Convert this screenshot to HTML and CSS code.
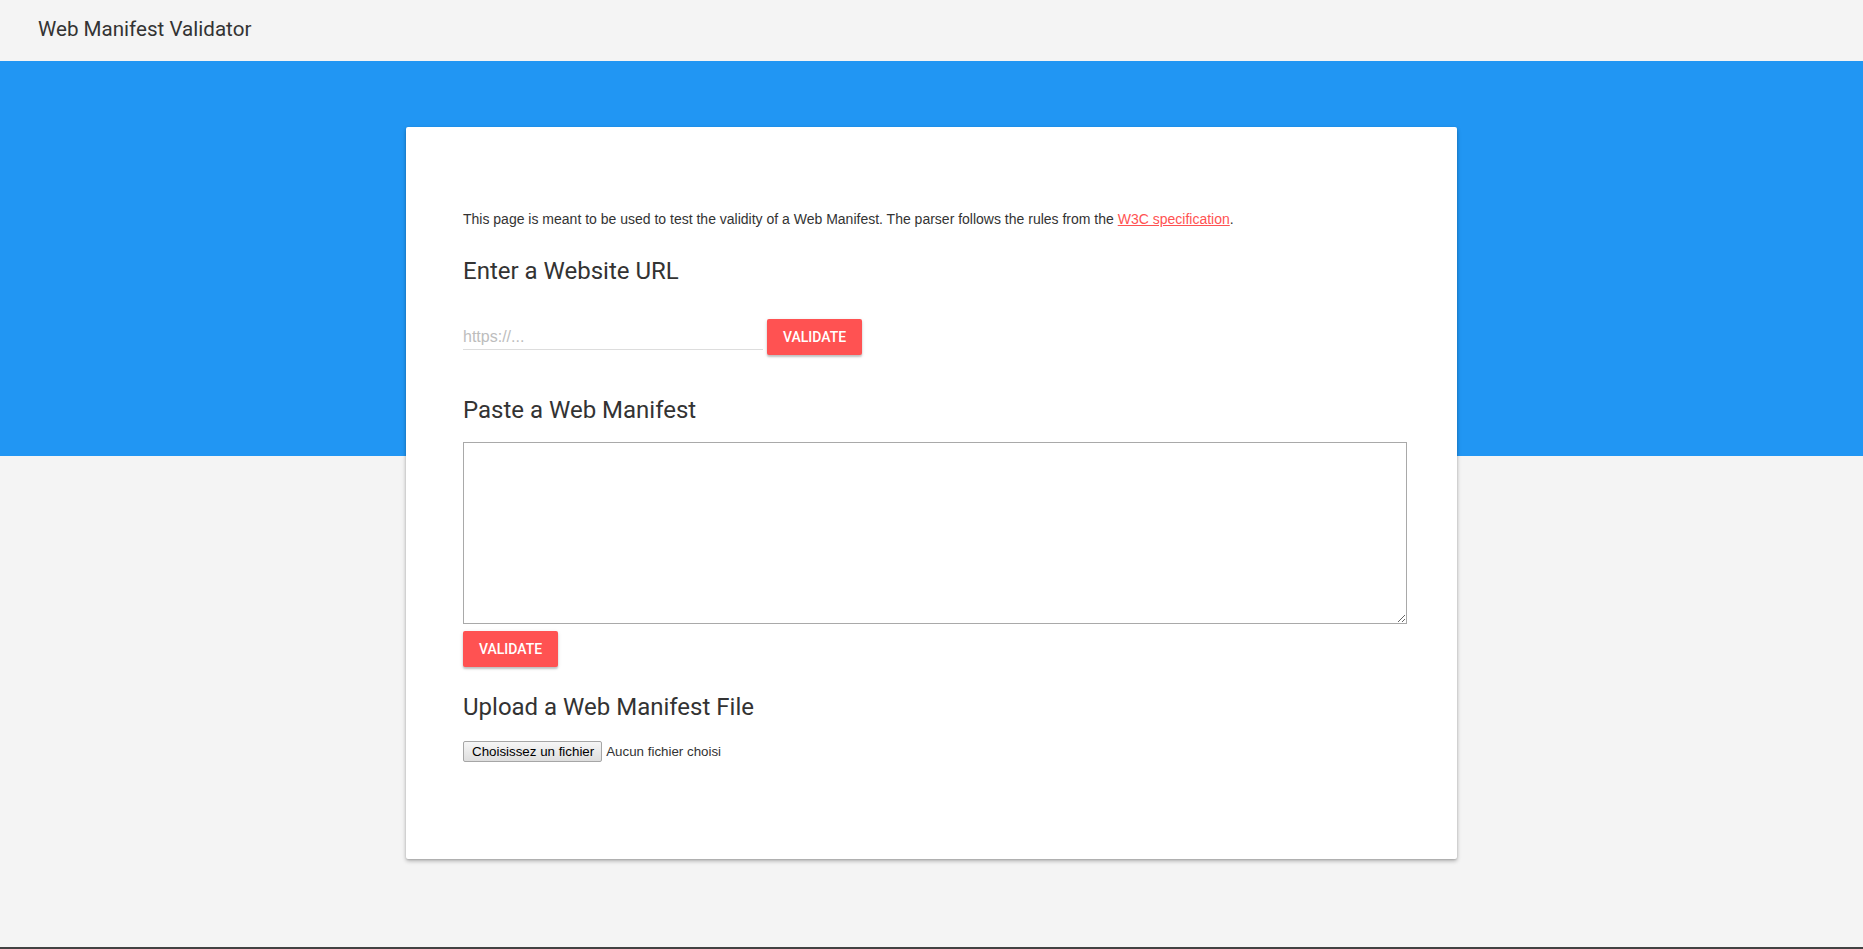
FILE: index.html
```
<!DOCTYPE html>
<html lang="fr">
<head>
<meta charset="utf-8">
<title>Web Manifest Validator</title>
<link rel="stylesheet" href="styles.css">
</head>
<body>
<header class="topbar">
  <span class="brand">Web Manifest Validator</span>
</header>
<main class="stage">
  <section class="card">
    <p class="intro">This page is meant to be used to test the validity of a Web Manifest. The parser follows the rules from the <a href="#" class="link">W3C specification</a>.</p>

    <h2 class="section-title first">Enter a Website URL</h2>
    <div class="url-row">
      <input class="url-input" type="text" placeholder="https://...">
      <button class="btn" type="button">VALIDATE</button>
    </div>

    <h2 class="section-title second">Paste a Web Manifest</h2>
    <textarea class="manifest"></textarea>
    <button class="btn btn-block" type="button">VALIDATE</button>

    <h2 class="section-title third">Upload a Web Manifest File</h2>
    <div class="file-row">
      <button class="file-btn" type="button">Choisissez un fichier</button>
      <span class="file-name">Aucun fichier choisi</span>
    </div>
  </section>
</main>
<footer class="footer"></footer>
</body>
</html>
```
FILE: styles.css
```
* { box-sizing: border-box; }

html, body {
  margin: 0;
  padding: 0;
}

body {
  background: #f4f4f4;
  font-family: Roboto, "Liberation Sans", Arial, sans-serif;
  color: #333;
}

.topbar {
  height: 61px;
  background: #f4f4f4;
  padding: 17px 0 0 38px;
}

.brand {
  display: block;
  font-size: 20.6px;
  line-height: 24px;
  color: #333;
}

.stage {
  background: linear-gradient(#2196f3 0, #2196f3 395px, #f4f4f4 395px);
  padding: 66px 0 88px;
}

.card {
  width: 1051px;
  height: 732px;
  margin: 0 auto;
  background: #fff;
  border-radius: 2px;
  box-shadow: 0 2px 4px rgba(0, 0, 0, 0.28), 0 1px 2px rgba(0, 0, 0, 0.12);
  padding: 83px 50px 0 57px;
}

.intro {
  margin: 0;
  font-family: "Liberation Sans", Arial, sans-serif;
  font-size: 14px;
  line-height: 18px;
  color: #333;
}

.link {
  color: #ff5252;
  text-decoration: underline;
}

.section-title {
  margin: 0;
  font-family: Roboto, sans-serif;
  font-weight: 400;
  font-size: 24px;
  line-height: 32px;
  color: #333;
}

.section-title.first { margin-top: 27px; }
.section-title.second { margin-top: 39px; }
.section-title.third { margin-top: 24px; }

.url-row {
  margin-top: 32px;
  display: flex;
  align-items: flex-start;
  gap: 4px;
}

.url-input {
  width: 300px;
  height: 31px;
  border: 0;
  border-bottom: 1px solid #ddd;
  padding: 6px 0 0;
  font-family: "Liberation Sans", Arial, sans-serif;
  font-size: 16px;
  color: #333;
  background: transparent;
  outline: none;
}

.url-input::placeholder {
  color: #bdbdbd;
}

.btn {
  height: 36px;
  padding: 0 16px;
  border: 0;
  border-radius: 2px;
  background: #ff5252;
  color: #fff;
  font-family: Roboto, sans-serif;
  font-weight: 500;
  font-size: 14px;
  box-shadow: 0 2px 2px rgba(0, 0, 0, 0.2), 0 1px 4px rgba(0, 0, 0, 0.1);
  cursor: pointer;
}

.btn-block {
  display: block;
  margin-top: 7px;
}

.manifest {
  display: block;
  margin-top: 16px;
  width: 944px;
  height: 182px;
  border: 1px solid #a9a9a9;
  resize: both;
  font-family: "Liberation Mono", monospace;
  font-size: 13px;
}

.file-row {
  margin-top: 18px;
  display: flex;
  align-items: center;
  gap: 4px;
  height: 21px;
}

.file-btn {
  height: 21px;
  padding: 0 7px 0 8px;
  font-family: "Liberation Sans", Arial, sans-serif;
  font-size: 13.33px;
  color: #000;
  border: 1px solid #a6a6a6;
  border-radius: 2px;
  background: linear-gradient(#f6f6f6, #dedede);
}

.file-name {
  font-family: "Liberation Sans", Arial, sans-serif;
  font-size: 13.33px;
  color: #333;
}

.footer {
  height: 60px;
  background: #424242;
}
```
